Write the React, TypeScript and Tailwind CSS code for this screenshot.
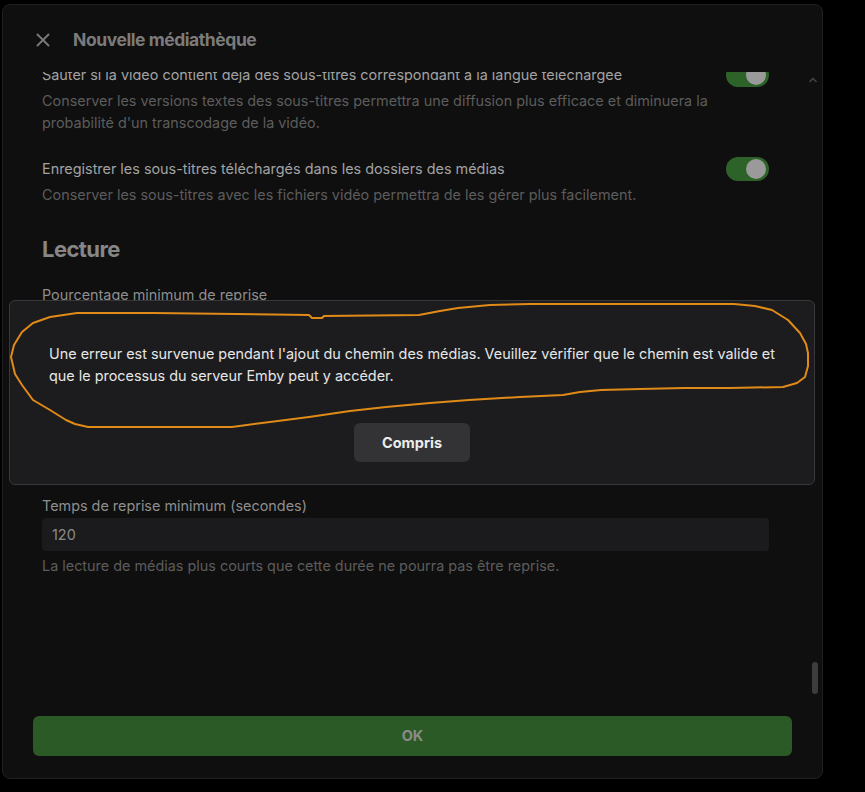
import { X } from "lucide-react"

function Toggle() {
  return (
    <div className="flex h-6 w-[43px] shrink-0 items-center justify-end rounded-full bg-[#2d6329] px-[3px]">
      <div className="h-[20px] w-[20px] rounded-full bg-[#9a9a9a]" />
    </div>
  )
}

function ToggleRow({ label, desc }: { label: string; desc: string[] }) {
  return (
    <div>
      <div className="flex h-6 items-center justify-between">
        <span className="text-[14.4px] text-[#a2a2a2]">{label}</span>
        <Toggle />
      </div>
      <p className="mt-[3px] pr-[40px] text-[14.4px] leading-[22px] text-[#5c5c5c]">
        {desc.map((l, i) => (
          <span key={i} className="block">
            {l}
          </span>
        ))}
      </p>
    </div>
  )
}

function Field({ label, value, help }: { label: string; value: string; help: string }) {
  return (
    <div>
      <div className="text-[14.4px] leading-[22px] text-[#8e8e8e]">{label}</div>
      <div className="mt-px flex h-[33px] items-center rounded bg-[#1b1b1d] px-[10px] text-[14.4px] text-[#8a8a8a]">
        {value}
      </div>
      <div className="mt-[4px] text-[14.4px] leading-[22px] text-[#5c5c5c]">{help}</div>
    </div>
  )
}

export default function App() {
  return (
    <div
      className="relative h-[792px] w-[865px] overflow-hidden bg-black pl-[2px] pt-[4px]"
      style={{ fontFamily: "Inter, 'Noto Sans', sans-serif" }}
    >
      <div className="flex h-[775px] w-[821px] flex-col rounded-lg border border-[#202020] bg-[#0f0f0f]">
        <header className="flex h-[67px] shrink-0 items-center pl-[29px] pt-[3px]">
          <X className="h-[22px] w-[22px] text-[#7a7a7a]" strokeWidth={2} />
          <h1 className="ml-[19px] text-[17.5px] font-bold tracking-tight text-[#7b7b7b]">
            Nouvelle médiathèque
          </h1>
        </header>

        <div className="relative flex-1 overflow-hidden">
          <div className="-mt-[9px] pl-[39px] pr-[53px]">
            <ToggleRow
              label="Sauter si la vidéo contient déjà des sous-titres correspondant à la langue téléchargée"
              desc={[
                "Conserver les versions textes des sous-titres permettra une diffusion plus efficace et diminuera la",
                "probabilité d'un transcodage de la vidéo.",
              ]}
            />
            <div className="mt-[23px]">
              <ToggleRow
                label="Enregistrer les sous-titres téléchargés dans les dossiers des médias"
                desc={["Conserver les sous-titres avec les fichiers vidéo permettra de les gérer plus facilement."]}
              />
            </div>
            <h2 className="mt-[28px] text-[22px] font-bold leading-[30px] tracking-tight text-[#868686]">
              Lecture
            </h2>
            <div className="mt-[20px]">
              <Field
                label="Pourcentage minimum de reprise"
                value="5"
                help="Les titres seront considérés comme non lus s'ils sont arrêtés avant ce pourcentage."
              />
            </div>
            <div className="mt-[20px]">
              <Field
                label="Pourcentage maximum de reprise"
                value="90"
                help="Les titres seront considérés comme lus s'ils sont arrêtés après ce pourcentage."
              />
            </div>
            <div className="mt-[27px]">
              <Field
                label="Temps de reprise minimum (secondes)"
                value="120"
                help="La lecture de médias plus courts que cette durée ne pourra pas être reprise."
              />
            </div>
          </div>

          <svg
            className="absolute right-[4px] top-[4px] text-[#474747]"
            width="10"
            height="8"
            viewBox="0 0 10 8"
            fill="none"
          >
            <path d="M1.5 6 L5 2.5 L8.5 6" stroke="currentColor" strokeWidth="1.4" />
          </svg>
          <div className="absolute right-[4px] top-[590px] h-[32px] w-[6px] rounded-full bg-[#3c3c3c]" />
        </div>

        <div className="shrink-0 px-[30px] pb-[22px] pt-[16px]">
          <button className="flex h-10 w-full items-center justify-center rounded-md bg-[#2b5a27] text-[14.5px] font-bold text-[#8b8b8b]">
            OK
          </button>
        </div>
      </div>

      <div className="absolute left-[9px] top-[300px] w-[806px] rounded-md border border-[#38383a] bg-[#1c1c1e] pb-[22px] pl-[39px] pr-[28px] pt-[42px]">
        <p className="text-[14.4px] leading-[22px] text-[#e6e6e6]">
          Une erreur est survenue pendant l'ajout du chemin des médias. Veuillez vérifier que le chemin est valide et
          que le processus du serveur Emby peut y accéder.
        </p>
        <div className="mt-[36px] flex justify-center pr-[11px]">
          <button className="h-[39px] w-[116px] rounded-md bg-[#333336] text-[14.5px] font-bold text-[#ececec]">
            Compris
          </button>
        </div>
      </div>

      <svg
        className="pointer-events-none absolute inset-0"
        width="865"
        height="792"
        viewBox="0 0 865 792"
        fill="none"
      >
        <path
          d="M11 357 L14 345 L22 332 L33 323 L50 317 L77 313 L154 313 L309 315 L312 318 L322 318 L324 316 L419 315 L440 311 L458 308 L490 305 L530 304 L734 304 L755 306 L772 310 L788 320 L800 333 L806 344 L808 353 L808 366 L805 377 L797 383 L783 387 L730 388 L684 388 L640 389 L601 390 L580 392 L563 395 L520 397 L469 400 L430 403 L386 407 L350 411 L309 417 L270 422 L232 427 L160 427 L88 427 L75 424 L66 420 L50 410 L33 400 L22 385 L15 374 Z"
          stroke="#e08a18"
          strokeWidth="2"
          strokeLinejoin="round"
        />
      </svg>
    </div>
  )
}
